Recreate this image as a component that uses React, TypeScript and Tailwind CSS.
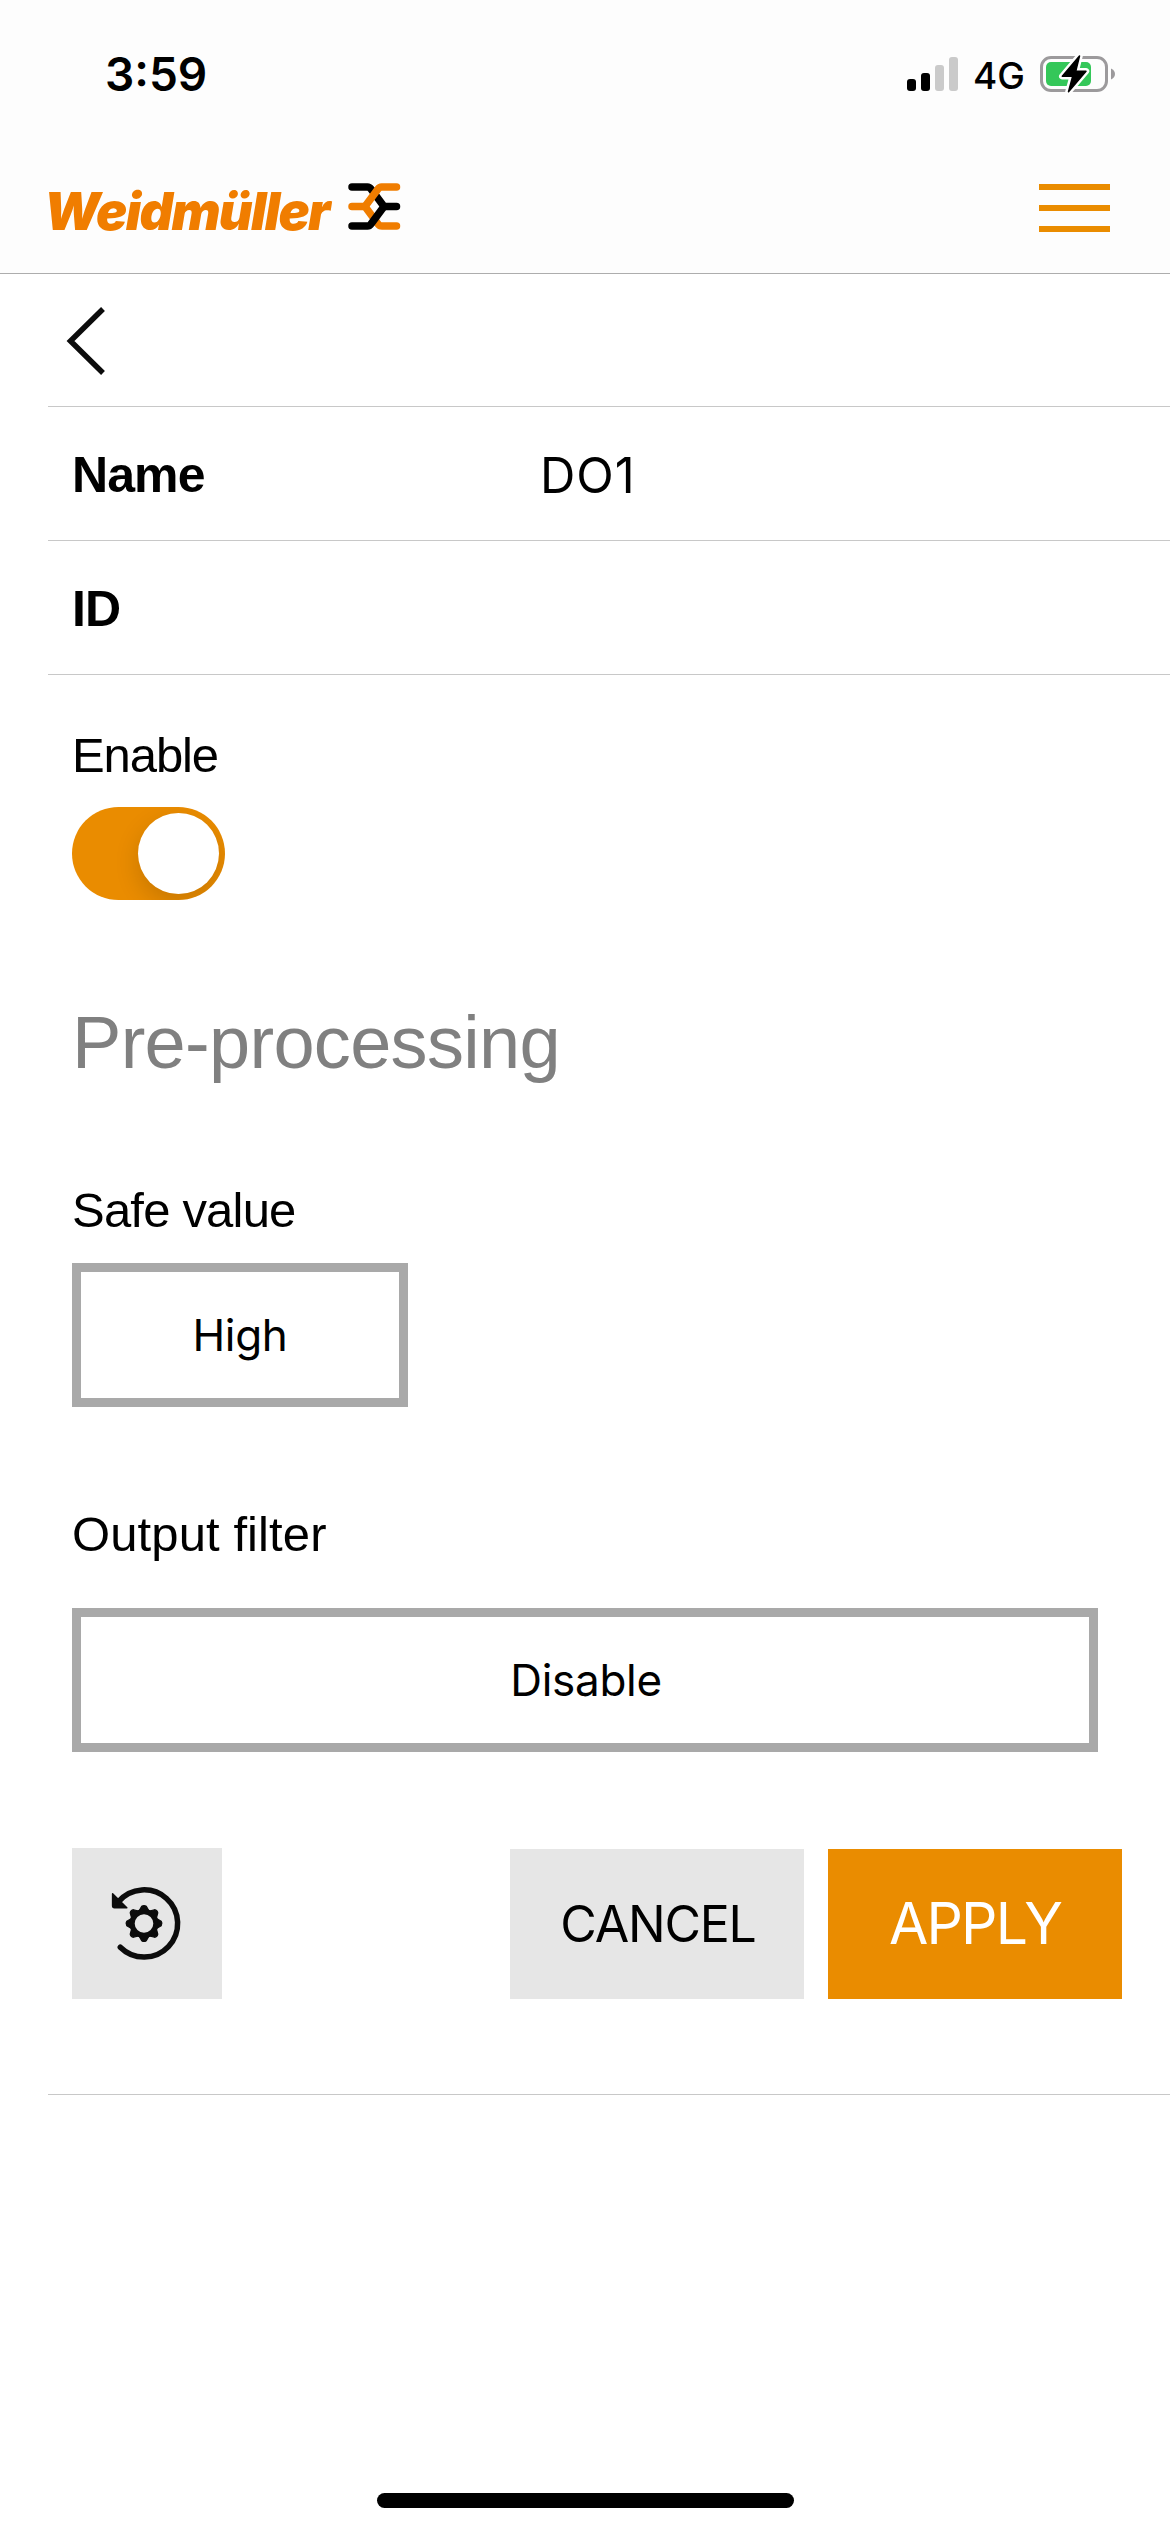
const teeth = [0, 45, 90, 135, 180, 225, 270, 315];

function StatusBar() {
  return (
    <div className="flex h-14 items-center pl-[105px] pr-[54px]">
      <span className="font-[Inter,sans-serif] text-[46px] leading-[56px] font-semibold">3:59</span>
      <div className="ml-auto flex h-14 items-center">
        <div className="flex h-[34px] items-end gap-[5px]">
          <span className="h-3 w-[9px] rounded-[3px] bg-black" />
          <span className="h-[18px] w-[9px] rounded-[3px] bg-black" />
          <span className="h-[26px] w-[9px] rounded-[3px] bg-[#cacaca]" />
          <span className="h-[34px] w-[9px] rounded-[3px] bg-[#cacaca]" />
        </div>
        <span className="mt-[3px] ml-[15px] w-[67px] font-[Inter,sans-serif] text-[37px] leading-[45px] font-medium">4G</span>
        <svg width="76" height="40" viewBox="0 -2 76 40">
          <rect x="1.5" y="1.5" width="65" height="33" rx="9.5" fill="none" stroke="#9c9a9c" strokeWidth="3" />
          <path d="M71 12.5c2.500 0.900 4 3.100 4 5.500s-1.500 4.600-4 5.500z" fill="#9c9a9c" />
          <rect x="6" y="6" width="45" height="24" rx="5" fill="#34c759" />
          <path d="M39.500 0L22.300 20.300H32.700L28.500 35.700L46 15.200H35.700Z" fill="#fff" stroke="#fff" strokeWidth="6.500" strokeLinejoin="round" />
          <path d="M39.500 0L22.300 20.300H32.700L28.500 35.700L46 15.200H35.700Z" fill="#000" stroke="#000" strokeWidth="1.500" strokeLinejoin="round" />
        </svg>
      </div>
    </div>
  );
}

function Brand() {
  return (
    <div className="flex items-start">
      <span className="w-[304px] font-[Inter,sans-serif] text-[52px] leading-[63px] font-black tracking-[-1.65px] text-[#f07d00] italic">
        Weidmüller
      </span>
      <svg className="mt-[3px]" width="53" height="47" viewBox="0 0 53 47" fill="none" strokeWidth="7.500" strokeLinecap="round" strokeLinejoin="round">
        <path d="M4 4H19.500Q21.500 4 23 6L36 23.500H48.500" stroke="#000" />
        <path d="M48.500 43H34Q31.500 43 30 41L17 23.500H4" stroke="#f07d00" />
        <path d="M48.500 4H33.500Q31.500 4 30 6L17 23.500" stroke="#f07d00" />
        <path d="M4 43H19.500Q21.500 43 23 41L36 23.500" stroke="#000" />
        <path d="M26.500 19.500L29.500 23.500L26.500 27.500Z" fill="#fff" />
      </svg>
    </div>
  );
}

function ResetIcon() {
  return (
    <svg className="mr-1.5" width="80" height="80" viewBox="-40 -39.5 80 80">
      <path d="M-23.700 23.700A33.600 33.600 0 1 0 -25.500 -21.900" fill="none" stroke="#0c0c0c" strokeWidth="5.500" strokeLinecap="round" />
      <path d="M-31.400 -29.800L-17.200 -15.800H-29.500Q-31.400 -15.800 -31.400 -17.700Z" fill="#0c0c0c" stroke="#0c0c0c" strokeWidth="1.500" strokeLinejoin="round" />
      <circle r="11.900" fill="none" stroke="#0c0c0c" strokeWidth="5.200" />
      {teeth.map((a) => (
        <path key={a} transform={`rotate(${a})`} d="M-5 -12.500L-2.300 -17.200Q0 -18.800 2.300 -17.200L5 -12.500Z" fill="#0c0c0c" stroke="#0c0c0c" strokeWidth="1.200" strokeLinejoin="round" />
      ))}
    </svg>
  );
}

function Row({ label, value }: { label: string; value?: string }) {
  return (
    <div className="ml-12 flex h-[134px] items-center border-b border-[#c8c8c8] pt-[3px] pl-6">
      <span className="w-[468px] text-[50px] leading-[56px] font-bold tracking-[-0.900px]">{label}</span>
      <span className="font-[Inter,sans-serif] text-[49px] leading-[59px] tracking-[1px]">{value}</span>
    </div>
  );
}

export default function App() {
  return (
    <div className="flex h-[2532px] w-[1170px] flex-col overflow-hidden bg-white font-['Liberation_Sans',Arial,sans-serif] text-black">
      <header className="flex h-[274px] flex-col border-b border-[#adadad] bg-[#fdfdfd] pt-[46px]">
        <StatusBar />
        <div className="mt-[78px] flex items-start justify-between pr-[60px] pl-11">
          <Brand />
          <div className="mt-1 flex w-[71px] flex-col gap-[15px]">
            <span className="h-1.5 bg-[#ea8c00]" />
            <span className="h-1.5 bg-[#ea8c00]" />
            <span className="h-1.5 bg-[#ea8c00]" />
          </div>
        </div>
      </header>

      <div className="ml-12 h-[133px] border-b border-[#c8c8c8] pt-[31px] pl-[18px]">
        <svg width="40" height="72" viewBox="0 0 40 72" fill="none" stroke="#0c0c0c" strokeWidth="5.500">
          <path d="M37 4L4.500 36L37 68" />
        </svg>
      </div>
      <Row label="Name" value="DO1" />
      <Row label="ID" />

      <main className="ml-12 flex h-[1420px] flex-col border-b border-[#c8c8c8] pt-[52px] pl-6">
        <label className="h-14 text-[49px] leading-[56px] tracking-[-1.1px]">Enable</label>
        <div className="mt-6 flex h-[93px] w-[153px] items-center justify-end overflow-hidden rounded-full bg-[#ea8c00] pr-1.5">
          <span className="size-[81px] rounded-full bg-white shadow-[0_9px_24px_rgba(0,0,0,0.15)]" />
        </div>
        <h2 className="mt-[101px] h-[84px] text-[74px] leading-[84px] tracking-[-0.700px] text-[#808080]">Pre-processing</h2>
        <label className="mt-[97px] h-14 text-[49px] leading-[56px] tracking-[-0.800px]">Safe value</label>
        <button className="mt-[25px] h-36 w-[336px] border-[9px] border-[#a9a9a9] font-[Inter,sans-serif] text-[44px] tracking-[-0.300px]">
          High
        </button>
        <label className="mt-[99px] h-14 text-[49px] leading-[56px] tracking-[0.1px]">Output filter</label>
        <button className="mt-[46px] h-36 w-[1026px] border-[9px] border-[#a9a9a9] pl-0.5 font-[Inter,sans-serif] text-[44px] tracking-[-0.300px]">
          Disable
        </button>
        <div className="mt-24 flex items-end pr-12">
          <button className="flex h-[151px] w-[150px] items-center justify-center bg-[#e6e6e6]">
            <ResetIcon />
          </button>
          <button className="ml-auto h-[150px] w-[294px] bg-[#e6e6e6] pl-0.5 font-[Inter,sans-serif] text-[50px] tracking-[-1.2px]">CANCEL</button>
          <button className="ml-6 h-[150px] w-[294px] bg-[#ea8c00] font-[Inter,sans-serif] text-[57px] tracking-[-1.8px] text-white">APPLY</button>
        </div>
      </main>
      <div className="mx-auto mt-auto mb-6 h-[15px] w-[417px] shrink-0 rounded-full bg-black" />
    </div>
  );
}
